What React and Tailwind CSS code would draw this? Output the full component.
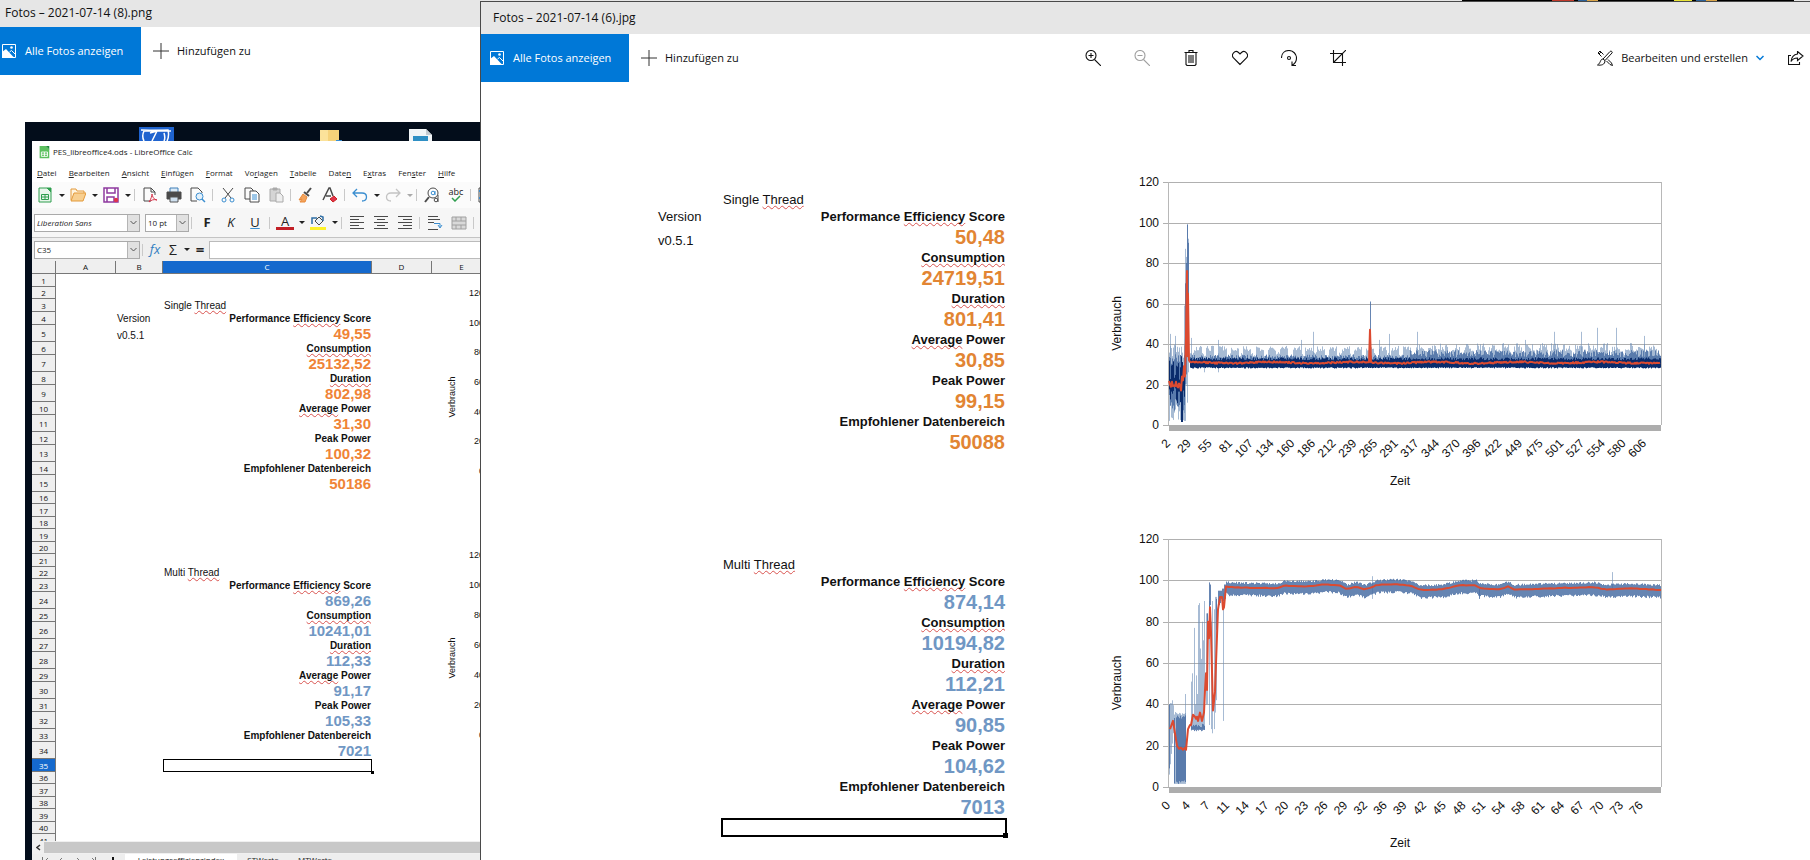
import { clsx } from "clsx"

const METRICS = [
  { label: "Performance Efficiency Score", typo: "Efficiency" },
  { label: "Consumption", typo: "Consumption" },
  { label: "Duration", typo: "Duration" },
  { label: "Average Power", typo: "Average" },
  { label: "Peak Power" },
  { label: "Empfohlener Datenbereich" },
]

const RUN_8 = {
  single: ["49,55", "25132,52", "802,98", "31,30", "100,32", "50186"],
  multi: ["869,26", "10241,01", "112,33", "91,17", "105,33", "7021"],
}

const RUN_6 = {
  single: ["50,48", "24719,51", "801,41", "30,85", "99,15", "50088"],
  multi: ["874,14", "10194,82", "112,21", "90,85", "104,62", "7013"],
}

const MENU = [
  ["", "D", "atei"],
  ["", "B", "earbeiten"],
  ["", "A", "nsicht"],
  ["", "E", "infügen"],
  ["", "F", "ormat"],
  ["Vo", "r", "lagen"],
  ["", "T", "abelle"],
  ["Date", "n", ""],
  ["E", "x", "tras"],
  ["Fen", "s", "ter"],
  ["", "H", "ilfe"],
]

const ZEIT_SINGLE = [2, 29, 55, 81, 107, 134, 160, 186, 212, 239, 265, 291, 317, 344, 370, 396, 422, 449, 475, 501, 527, 554, 580, 606]
const ZEIT_MULTI = [0, 4, 7, 11, 14, 17, 20, 23, 26, 29, 32, 36, 39, 42, 45, 48, 51, 54, 58, 61, 64, 67, 70, 73, 76]
const TICKS = [0, 20, 40, 60, 80, 100, 120]

/* ---------- power curves ---------- */

const PLOT_LEFT = 63
const PLOT_WIDTH = 492
const PLOT_TOP = 8

function makeRandom(seed) {
  let s = seed
  return () => {
    s = (s * 16807) % 2147483647
    return s / 2147483647
  }
}

// linear interpolation through [x, value] points
function sample(points, x) {
  for (let i = 1; i < points.length; i++) {
    const [x0, v0] = points[i - 1]
    const [x1, v1] = points[i]
    if (x <= x1) return v0 + ((v1 - v0) * (x - x0)) / (x1 - x0)
  }
  return points[points.length - 1][1]
}

function bar(x, low, high) {
  return { x, low, high }
}

function singleSeries() {
  const rnd = makeRandom(41)
  const light = []
  const mid = []
  const dark = []
  const avg = []
  for (let px = 0; px < PLOT_WIDTH; px++) {
    if (px < 16) {
      light.push(bar(px, 2 + rnd() * 9, 33 + rnd() * 7))
      mid.push(bar(px, 7 + rnd() * 8, 28 + rnd() * 7))
      dark.push(bar(px, 10 + rnd() * 9, 22 + rnd() * 10))
      avg.push([px, 18.5 + rnd() * 3.5])
      continue
    }
    if (px < 21) continue
    const burst = px % 12.3 < 8
    const late = px > 240
    light.push(bar(px, 29, (burst ? 36.5 : 33.5) + rnd() * (late ? 4 : 2.6)))
    mid.push(bar(px, 28.5, late ? 33.5 + rnd() * 3.5 : 32.5 + rnd() * 2.2))
    dark.push(bar(px, 27.9 + rnd() * 0.7, 32 + rnd() * 1.4))
    avg.push([px, 30.4 + Math.sin(px / 13) * 0.35 + rnd() * 0.8])
  }
  dark.push(bar(12, 1.5, 34), bar(13, 1.5, 31))
  light.push(bar(1, 20, 45), bar(6, 20, 44), bar(15, 2, 59), bar(16, 2, 87), bar(18, 11, 99), bar(17, 20, 83), bar(19, 26, 92))
  mid.push(bar(16, 20, 70), bar(17, 25, 80), bar(18, 40, 99), bar(19, 50, 90), bar(201, 30, 61))
  light.push(bar(22, 30, 43), bar(49, 26, 42), bar(35, 26, 31), bar(144, 30, 46), bar(132, 30, 42), bar(210, 30, 42), bar(220, 30, 45))
  light.push(bar(248, 30, 46), bar(356, 30, 42), bar(385, 30, 46), bar(412, 30, 46), bar(428, 30, 48), bar(447, 30, 48), bar(475, 30, 44))
  const line = [
    ...avg.slice(0, 12),
    [12, 17], [13, 24], [14, 22], [15, 29], [16, 24], [17, 44], [18, 76], [18.5, 34], [19, 65], [19.5, 48], [20, 32],
    ...avg.slice(16, 195),
    [200, 31], [201, 47], [202, 31],
    ...avg.slice(198),
  ]
  return { light, mid, dark, line }
}

const MULTI_AVG = [
  [1, 28], [4, 32], [6, 26], [8, 20], [10, 18.5], [12, 19], [14, 18], [16, 19], [17, 18], [19, 28], [21, 30], [22, 30],
  [24, 35], [26, 34], [27, 33], [28, 34], [29, 32], [31, 36], [32, 34], [33, 32], [35, 36], [36, 47], [37, 55], [38, 47],
  [39, 80], [40, 72], [41, 87], [42, 75], [44, 37], [46, 46], [47, 60], [49, 86], [51, 92], [53, 92], [54, 86], [55, 87],
  [57, 97], [60, 96.5], [108, 96], [115, 97.3], [142, 97], [155, 98], [170, 97.5], [178, 95.5], [187, 96.8], [196, 95.3],
  [208, 97.6], [228, 98], [242, 97.2], [251, 95.2], [274, 95.5], [288, 97.3], [307, 97.6], [311, 96], [331, 95.5],
  [339, 97], [345, 95.4], [398, 96.2], [425, 96.5], [438, 95.4], [458, 96], [492, 95.3],
]

function multiSeries() {
  const rnd = makeRandom(977)
  const light = []
  const mid = []
  for (let px = 57; px < PLOT_WIDTH; px++) {
    const v = sample(MULTI_AVG, px)
    mid.push(bar(px, v - 3 - rnd() * 1.2, v + 1.9 + rnd() * 1))
  }
  for (let px = 0; px < 5; px++) light.push(bar(px, 6 + px * 5, 38 + rnd() * 5))
  for (let px = 5; px < 17; px++) {
    light.push(bar(px, 1.5, 34 + rnd() * 2.5))
    if (px > 6 || px % 2) mid.push(bar(px, 1.5 + rnd() * 2, 33 + rnd() * 2))
  }
  const spikes = [51, 55, 34, 77, 40, 54, 45, 88, 89, 67, 62, 80, 71, 90]
  spikes.forEach((v, i) => {
    light.push(bar(22 + i, 28, v))
    mid.push(bar(22 + i, 27 + rnd(), 29 + rnd() * 2))
  })
  light.push(bar(16, 20, 45), bar(37, 40, 84), bar(38, 40, 84), bar(40, 30, 90), bar(42, 28, 80), bar(43, 26, 90))
  light.push(bar(45, 28, 86), bar(46, 36, 92), bar(47, 42, 92), bar(54, 32, 94), bar(203, 91, 102))
  mid.push(bar(0, 9, 40), bar(38, 76, 84), bar(40, 84, 99), bar(41, 88, 98), bar(47, 76, 91), bar(49, 88, 95))
  mid.push(bar(50, 88, 95), bar(51, 89, 95), bar(52, 91, 95), bar(53, 91, 96), bar(54, 90, 96), bar(55, 92, 98), bar(56, 91, 98))
  mid.push(bar(310, 91, 96))
  light.push(bar(443, 96, 104))
  const line = MULTI_AVG.filter(([x]) => x < 60)
  for (let px = 60; px <= PLOT_WIDTH; px += 3) line.push([px, sample(MULTI_AVG, px) + rnd() * 0.3])
  return { light, mid, dark: [], line }
}

const SINGLE = singleSeries()
const MULTI = multiSeries()

function PowerChart({ title, height, zeit, pitch, series }) {
  const bottom = PLOT_TOP + height
  const y = (v) => bottom - (v * height) / 120
  const bars = (list) => list.map((b) => `M${PLOT_LEFT + b.x + 0.5} ${y(b.low).toFixed(1)}V${y(b.high).toFixed(1)}`).join("")
  const line = series.line.map(([x, v]) => `${PLOT_LEFT + x},${y(v).toFixed(1)}`).join(" ")
  const right = PLOT_LEFT + PLOT_WIDTH

  return (
    <svg
      role="img"
      aria-label={title}
      width="570"
      height={bottom + 74}
      className="block shrink-0 fill-[#111] font-['Liberation_Sans',Arial,sans-serif] text-xs"
    >
      {TICKS.map((v) => (
        <g key={v}>
          <path d={`M${PLOT_LEFT - 6} ${Math.round(y(v)) + 0.5}H${right}`} stroke="#b0b0b0" />
          <text x="53" y={y(v) + 4} textAnchor="end">
            {v}
          </text>
        </g>
      ))}
      <path d={`M${PLOT_LEFT - 0.5} ${PLOT_TOP}V${bottom}M${right + 0.5} ${PLOT_TOP}V${bottom}`} stroke="#b8b8b8" />
      <path d={`M${PLOT_LEFT} ${bottom + 3}H${right}`} stroke="#adadad" strokeWidth="6" />
      <path d={bars(series.light)} stroke="#6d8db8" strokeOpacity="0.6" />
      <path d={bars(series.mid)} stroke="#4b70a5" strokeOpacity="0.85" />
      <path d={bars(series.dark)} stroke="#0a2c6c" />
      <polyline points={line} fill="none" stroke="#dc4a30" strokeWidth="2" strokeLinejoin="round" />
      {zeit.map((t, i) => {
        const x = PLOT_LEFT + 2 + i * pitch
        const ty = bottom + 19
        return (
          <text key={t} x={x} y={ty} textAnchor="end" transform={`rotate(-45 ${x} ${ty})`}>
            {t}
          </text>
        )
      })}
      <text x="294" y={bottom + 60} textAnchor="middle">
        Zeit
      </text>
      <text x="15" y={bottom - height / 2 + 20} textAnchor="middle" transform={`rotate(-90 15 ${bottom - height / 2 + 20})`}>
        Verbrauch
      </text>
    </svg>
  )
}

/* ---------- spreadsheet ---------- */

function Spell({ text, typo }) {
  if (!typo) return text
  const [before, after] = text.split(typo)
  return (
    <>
      {before}
      <span className="underline decoration-[#d9534f] decoration-wavy decoration-1 underline-offset-1 [text-decoration-skip-ink:none]">
        {typo}
      </span>
      {after}
    </>
  )
}

// what stands in columns B and C of a given row
function cellsFor(row, data) {
  if (row === 3) return { kind: "title", text: "Single Thread" }
  if (row === 22) return { kind: "title", text: "Multi Thread" }
  if (row === 35) return { kind: "selected" }
  const multi = row > 22
  const index = row - (multi ? 23 : 4)
  if (index < 0 || index > 11) return { kind: "blank" }
  const side = row === 4 ? "Version" : row === 5 ? "v0.5.1" : ""
  const metric = Math.floor(index / 2)
  if (index % 2 === 0) return { kind: "label", side, ...METRICS[metric] }
  return { kind: "value", side, multi, text: (multi ? data.multi : data.single)[metric] }
}

function rowHeight(row, kind, compact) {
  if (!compact) return kind === "value" ? "h-6" : "h-[17px]"
  if (kind === "value") return "h-[17px]"
  return kind === "label" || row % 2 ? "h-[13px]" : "h-3"
}

function Sheet({ data, first, last, compact }) {
  const rows = Array.from({ length: last - first + 1 }, (_, i) => first + i)

  return (
    <table
      className={clsx(
        "shrink-0 table-fixed border-separate border-spacing-0 whitespace-nowrap font-['Liberation_Sans',Arial,sans-serif] text-[#111]",
        compact ? "w-[460px] text-[10px] leading-3" : "w-[349px] text-[13px] leading-[17px]",
      )}
    >
      {compact ? (
        <colgroup>
          <col className="w-6" />
          <col className="w-[60px]" />
          <col className="w-[47px]" />
          <col className="w-[209px]" />
          <col className="w-[60px]" />
          <col className="w-[60px]" />
        </colgroup>
      ) : (
        <colgroup>
          <col className="w-[65px]" />
          <col className="w-[284px]" />
        </colgroup>
      )}
      {compact && (
        <thead className="bg-[#efefef] font-['Open_Sans',sans-serif] text-[8px]">
          <tr className="h-[13px]">
            {["", "A", "B", "C", "D", "E"].map((name) => (
              <th
                key={name}
                className={clsx(
                  "border-r border-b border-[#777] font-normal",
                  name === "C" && "bg-[#1569cd] text-white",
                )}
              >
                {name}
              </th>
            ))}
          </tr>
        </thead>
      )}
      <tbody>
        {rows.map((row) => {
          const cell = cellsFor(row, data)
          return (
            <tr key={row} className={rowHeight(row, cell.kind, compact)}>
              {compact && (
                <th
                  className={clsx(
                    "border-r border-b border-[#777] font-['Open_Sans',sans-serif] text-[8px] leading-[11px] font-normal",
                    row === 35 ? "bg-[#1569cd] text-white" : "bg-[#efefef]",
                  )}
                >
                  {row}
                </th>
              )}
              {compact && <td />}
              <td className="pl-px align-bottom">{cell.side}</td>
              {cell.kind === "title" && (
                <td className="pl-px">
                  <Spell text={cell.text} typo="Thread" />
                </td>
              )}
              {cell.kind === "label" && (
                <td className="pr-px text-right font-bold">
                  <Spell text={cell.label} typo={cell.typo} />
                </td>
              )}
              {cell.kind === "value" && (
                <td
                  className={clsx(
                    "pr-px text-right font-bold",
                    compact ? "text-[15px] leading-[17px]" : "text-xl leading-6",
                    cell.multi ? "text-[#7097c4]" : compact ? "text-[#f08437]" : "text-[#e28533]",
                  )}
                >
                  {cell.text}
                </td>
              )}
              {cell.kind === "selected" && (
                <td className={clsx("relative -outline-offset-1 outline-black", compact ? "outline-1" : "outline-2")}>
                  <span className={clsx("absolute -right-0.5 -bottom-0.5 bg-black", compact ? "size-[3px]" : "size-[5px]")} />
                </td>
              )}
              {cell.kind === "blank" && <td />}
              {compact && <td colSpan={2} />}
            </tr>
          )
        })}
      </tbody>
    </table>
  )
}

// axis captions of the two charts that stick out of column E
function ChartEdges() {
  const charts = [
    { top: 32, zero: 210, middle: 136 },
    { top: 294, zero: 474, middle: 397 },
  ]
  return (
    <svg
      width="60"
      height="500"
      className="absolute top-0 left-[408px] fill-[#111] font-['Liberation_Sans',Arial,sans-serif] text-[9px]"
    >
      {charts.map((c) => (
        <g key={c.zero}>
          {TICKS.map((v) => (
            <text key={v} x="44" y={c.zero + 3 - (v / 120) * (c.zero - c.top)} textAnchor="end">
              {v}
            </text>
          ))}
          <text x="15" y={c.middle} textAnchor="middle" transform={`rotate(-90 15 ${c.middle})`}>
            Verbrauch
          </text>
        </g>
      ))}
    </svg>
  )
}

/* ---------- LibreOffice toolbars ---------- */

const Glyph = ({ children }) => (
  <svg width="16" height="16" viewBox="0 0 16 16" fill="none" stroke="#4a4a4a" aria-hidden="true">
    {children}
  </svg>
)

const LO_ICONS = {
  new: (
    <Glyph>
      <path d="M2 1H10L14 5V15H2Z" fill="#e9f6ec" stroke="#2f9e4f" />
      <path d="M10 1L14 5V1Z" fill="#2f9e4f" stroke="#2f9e4f" />
      <path d="M4.500 7.500H11.500V12.500H4.500ZM4.500 10H11.500M8 7.500V12.500" stroke="#2f9e4f" />
    </Glyph>
  ),
  open: (
    <Glyph>
      <path d="M1 13V2H6L7 4H14V6" stroke="#e39a3b" fill="#fff3dd" />
      <path d="M1 14L4 6H16L13 14Z" fill="#f8cf90" stroke="#e39a3b" />
    </Glyph>
  ),
  save: (
    <Glyph>
      <path d="M1 1H15V15H1Z" fill="#fff" stroke="#8e3aa0" strokeWidth="1.500" />
      <path d="M4 1V6H12V1M4 15V10H11V15" stroke="#8e3aa0" strokeWidth="1.500" />
      <circle cx="13" cy="13" r="2.200" fill="#e0334c" stroke="none" />
    </Glyph>
  ),
  pdf: (
    <Glyph>
      <path d="M9 14H2V1H9L13 5V8" />
      <path d="M9 1V5H13" />
      <path d="M7 15C9 12 10 9 10 7C10 9 12 13 15 13C12 12 9 13 7 15Z" stroke="#d6344a" />
    </Glyph>
  ),
  print: (
    <Glyph>
      <path d="M4 5V1H12V5" stroke="#3f7fb8" fill="#dcebf7" />
      <path d="M1 5H15V12H1Z" fill="#4a4a4a" />
      <path d="M4 10H12V15H4Z" fill="#cfe0ef" stroke="#555" />
    </Glyph>
  ),
  preview: (
    <Glyph>
      <path d="M7 14H1V1H8L12 5V6" />
      <circle cx="9.500" cy="9.500" r="3.500" stroke="#3b8ed0" fill="#e3f1fb" />
      <path d="M12 12L15 15" stroke="#3b8ed0" strokeWidth="1.500" />
    </Glyph>
  ),
  cut: (
    <Glyph>
      <path d="M3 1L11 11M13 1L5 11" />
      <circle cx="4" cy="13" r="2" stroke="#3b8ed0" />
      <circle cx="12" cy="13" r="2" stroke="#3b8ed0" />
    </Glyph>
  ),
  copy: (
    <Glyph>
      <path d="M6 12H1V1H7L9 3V4" />
      <path d="M6 4H12L15 7V15H6Z" fill="#fff" />
      <path d="M8 8H13M8 10H13M8 12H13" stroke="#3b8ed0" />
    </Glyph>
  ),
  paste: (
    <Glyph>
      <path d="M2 2H12V14H2Z" fill="#d5d5d5" stroke="#aaa" />
      <path d="M5 1H9V3H5Z" fill="#aaa" stroke="#aaa" />
      <path d="M8 6H12L15 9V15H8Z" fill="#eee" stroke="#aaa" />
    </Glyph>
  ),
  brush: (
    <Glyph>
      <path d="M13 1L9 6" strokeWidth="2" />
      <path d="M6 5L11 9" strokeWidth="2" />
      <path d="M5 7L9 10L7 15H2L4 12L1 13Z" fill="#f3a35c" stroke="#e98a3a" />
    </Glyph>
  ),
  clear: (
    <Glyph>
      <path d="M1 13L7 1H8L11 9M4 9H9" strokeWidth="1.500" />
      <path d="M8 12L12 9L15 12L11 15Z" fill="#e0334c" stroke="#c22" />
    </Glyph>
  ),
  undo: (
    <Glyph>
      <path d="M5 2L1 6L5 10M1 6H10C16 6 16 14 10 14" stroke="#3b8ed0" strokeWidth="1.300" />
    </Glyph>
  ),
  redo: (
    <Glyph>
      <path d="M11 2L15 6L11 10M15 6H6C0 6 0 14 6 14" stroke="#c4c4c4" strokeWidth="1.300" />
    </Glyph>
  ),
  find: (
    <Glyph>
      <circle cx="9" cy="6" r="5" fill="#fff" />
      <path d="M5 10L1 15" strokeWidth="2" />
      <circle cx="9" cy="6" r="1.800" stroke="#3b8ed0" />
      <path d="M11 4V8" stroke="#3b8ed0" />
      <circle cx="12" cy="13" r="1.800" />
      <path d="M14 8V15" />
    </Glyph>
  ),
  table: (
    <Glyph>
      <path d="M1 1H15V15H1Z" fill="#fff" />
      <path d="M1 4H15M1 11H15" stroke="#3b8ed0" strokeWidth="2" />
      <path d="M6 1V15" />
    </Glyph>
  ),
  bucket: (
    <Glyph>
      <path d="M5 6L9 2L13 6L9 10Z" fill="#e8f1f8" />
      <path d="M2 9V3H7M10 1L13 2V6" stroke="#2e6da4" strokeWidth="1.500" />
      <path d="M0 13.500H16" stroke="#fdf12a" strokeWidth="3" />
    </Glyph>
  ),
  left: (
    <Glyph>
      <path d="M1 1.500H15M1 4.500H10M1 7.500H15M1 10.500H10M1 13.500H15" />
    </Glyph>
  ),
  center: (
    <Glyph>
      <path d="M1 1.500H15M4 4.500H12M1 7.500H15M4 10.500H12M1 13.500H15" />
    </Glyph>
  ),
  right: (
    <Glyph>
      <path d="M1 1.500H15M6 4.500H15M1 7.500H15M6 10.500H15M1 13.500H15" />
    </Glyph>
  ),
  wrap: (
    <Glyph>
      <path d="M1 1.500H11M1 4.500H13M1 7.500H7M1 14.500H11" />
      <path d="M7 8.500H13V12M11 10L13 13L15 10" stroke="#3b8ed0" />
    </Glyph>
  ),
  merge: (
    <Glyph>
      <path d="M1 2H15V14H1ZM1 6H15M1 10H15M5 2V6M10 2V6M5 10V14M10 10V14" fill="#d9d9d9" stroke="#a0a0a0" />
    </Glyph>
  ),
}

function Tool({ label, className, children }) {
  return (
    <button type="button" aria-label={label} className={clsx("flex h-5 w-6 shrink-0 items-center justify-center", className)}>
      {children}
    </button>
  )
}

function Caret({ faded }) {
  return (
    <button type="button" aria-label="Optionen" className="flex h-5 w-[9px] shrink-0 items-center justify-center">
      <span className={clsx("border-x-[3px] border-t-[3px] border-x-transparent", faded ? "border-t-[#aaa]" : "border-t-[#222]")} />
    </button>
  )
}

function Divider() {
  return <span className="mr-[3px] ml-0.5 h-3 w-px shrink-0 bg-[#c9c9c9]" />
}

function Chevron() {
  return (
    <span className="pointer-events-none flex w-3 items-center justify-center border-l border-[#b5b5b5] bg-[#e1e1e1]">
      <svg width="7" height="5" viewBox="0 0 7 5" fill="none" stroke="#555">
        <path d="M0.500 1L3.500 4L6.500 1" />
      </svg>
    </span>
  )
}

function Combo({ label, value, className }) {
  return (
    <label className={clsx("flex h-[18px] shrink-0 border border-[#aaa] bg-white", className)}>
      <select aria-label={label} defaultValue={value} className="min-w-0 flex-1 appearance-none pl-0.5 outline-none">
        <option>{value}</option>
      </select>
      <Chevron />
    </label>
  )
}

function CalcWindow() {
  return (
    <div className="flex min-h-0 flex-1 flex-col overflow-hidden bg-[#f6f6f6] font-['Open_Sans',sans-serif] text-[8px] text-[#222]">
      <div className="flex h-[22px] shrink-0 items-center gap-0.5 bg-white pl-[5px]">
        <svg width="14" height="14" viewBox="0 0 16 16" fill="none">
          <path d="M3 1H10L14 5V15H3Z" fill="#5cc05f" />
          <path d="M10 1L14 5V1Z" fill="#1f8a3a" />
          <path d="M5 8H12V13H5ZM5 10.500H12M8.500 8V13" stroke="#fff" />
        </svg>
        <span>PES_libreoffice4.ods - LibreOffice Calc</span>
      </div>

      <nav className="flex h-[19px] shrink-0 items-center gap-3 bg-white pl-[5px]">
        {MENU.map(([before, key, after]) => (
          <button type="button" key={before + key + after} className="shrink-0">
            {before}
            <u>{key}</u>
            {after}
          </button>
        ))}
      </nav>

      <div className="flex h-[26px] shrink-0 items-center bg-[#fbfbfb] pl-px">
        <Tool label="Neu">{LO_ICONS.new}</Tool>
        <Caret />
        <Tool label="Öffnen">{LO_ICONS.open}</Tool>
        <Caret />
        <Tool label="Speichern">{LO_ICONS.save}</Tool>
        <Caret />
        <Divider />
        <Tool label="Als PDF exportieren">{LO_ICONS.pdf}</Tool>
        <Tool label="Drucken">{LO_ICONS.print}</Tool>
        <Tool label="Druckvorschau">{LO_ICONS.preview}</Tool>
        <Divider />
        <Tool label="Ausschneiden">{LO_ICONS.cut}</Tool>
        <Tool label="Kopieren">{LO_ICONS.copy}</Tool>
        <Tool label="Einfügen">{LO_ICONS.paste}</Tool>
        <Divider />
        <Tool label="Format übertragen">{LO_ICONS.brush}</Tool>
        <Tool label="Formatierung löschen">{LO_ICONS.clear}</Tool>
        <Divider />
        <Tool label="Rückgängig">{LO_ICONS.undo}</Tool>
        <Caret />
        <Tool label="Wiederherstellen">{LO_ICONS.redo}</Tool>
        <Caret faded />
        <Divider />
        <Tool label="Suchen">{LO_ICONS.find}</Tool>
        <Tool label="Rechtschreibung" className="flex-col">
          <span className="text-[9px] leading-[7px]">abc</span>
          <svg width="10" height="7" viewBox="0 0 10 7" fill="none" stroke="#2f9e4f" strokeWidth="1.500">
            <path d="M1 3L4 6L9 1" />
          </svg>
        </Tool>
        <Divider />
        <Tool label="Zeile">{LO_ICONS.table}</Tool>
      </div>

      <div className="flex h-[30px] shrink-0 items-center border-b border-[#c4c4c4] pl-0.5">
        <Combo label="Schriftart" value="Liberation Sans" className="mr-[5px] w-[106px] italic" />
        <Combo label="Schriftgröße" value="10 pt" className="w-11" />
        <Divider />
        <Tool label="Fett" className="text-[13px] font-bold">F</Tool>
        <Tool label="Kursiv" className="text-[13px] italic">K</Tool>
        <Tool label="Unterstrichen" className="text-[13px] underline decoration-[#3b8ed0]">U</Tool>
        <Divider />
        <Tool label="Schriftfarbe" className="flex-col text-[13px] leading-3">
          A
          <span className="h-[3px] w-[18px] bg-[#c21f26]" />
        </Tool>
        <Caret />
        <Tool label="Hintergrundfarbe">{LO_ICONS.bucket}</Tool>
        <Caret />
        <Divider />
        <Tool label="Linksbündig">{LO_ICONS.left}</Tool>
        <Tool label="Zentriert">{LO_ICONS.center}</Tool>
        <Tool label="Rechtsbündig">{LO_ICONS.right}</Tool>
        <Divider />
        <Tool label="Textumbruch">{LO_ICONS.wrap}</Tool>
        <Tool label="Zellen verbinden">{LO_ICONS.merge}</Tool>
        <Divider />
      </div>

      <div className="flex h-[23px] shrink-0 items-center bg-[#efefef] pl-0.5">
        <Combo label="Namenfeld" value="C35" className="w-[106px]" />
        <Divider />
        <button type="button" aria-label="Funktions-Assistent" className="w-[18px] text-[13px] italic text-[#2e7cc0]">fx</button>
        <button type="button" aria-label="Summe" className="w-[18px] text-sm">Σ</button>
        <Caret />
        <button type="button" aria-label="Formel" className="w-[18px] text-[15px] font-bold">=</button>
        <input aria-label="Eingabezeile" className="h-[18px] min-w-0 flex-1 border border-r-0 border-[#bbb] bg-white px-1 outline-none" />
      </div>

      <div className="relative min-h-0 flex-1 overflow-hidden bg-white">
        <Sheet data={RUN_8} first={1} last={41} compact />
        <ChartEdges />
      </div>

      <div className="flex h-[13px] shrink-0 items-center bg-[#f0f0f0]">
        <button type="button" aria-label="Nach links" className="flex w-3 justify-center">
          <svg width="5" height="7" viewBox="0 0 5 7" fill="none" stroke="#333" strokeWidth="1.500">
            <path d="M4 1L1 3.500L4 6" />
          </svg>
        </button>
        <span className="h-[11px] flex-1 bg-[#c8c8c8]" />
      </div>
      <div className="flex h-1.5 shrink-0 items-start overflow-hidden bg-[#eee] leading-[11px]">
        <svg width="93" height="6" viewBox="0 0 93 6" fill="none" stroke="#777">
          <path d="M10.500 3V6M16 4L14 6M30 4L28 6M45 4L47 6M60 4L62 6M63.500 3V6" />
          <path d="M81 3V6" stroke="#111" strokeWidth="2" />
        </svg>
        <button type="button" className="w-28 bg-white">Leistungseffizienzindex</button>
        <button type="button" className="w-[52px]">STWerte</button>
        <button type="button" className="w-[52px]">MTWerte</button>
      </div>
    </div>
  )
}

/* ---------- photo viewer ---------- */

function ViewerActions({ inset }) {
  return (
    <div className="flex shrink-0 text-[11px]">
      <button type="button" className={clsx("flex h-12 items-center gap-[9px] bg-[#0078d7] text-white", inset ? "w-[148px] pl-[9px]" : "w-[141px] pl-0.5")}>
        <svg width="14" height="14" viewBox="0 0 14 14" fill="none">
          <path d="M0.500 0.500H13.500V13.500H0.500Z" stroke="#fff" />
          <path d="M0 8L4 5L11 12.500L13 14H0Z" fill="#fff" />
          <path d="M7.500 8L9.500 6.500L14 11" stroke="#fff" />
          <circle cx="9.500" cy="3.500" r="1.300" fill="#fff" />
        </svg>
        Alle Fotos anzeigen
      </button>
      <button type="button" className="flex h-12 items-center gap-2 pr-4 pl-3">
        <svg width="16" height="16" viewBox="0 0 16 16" stroke="#333">
          <path d="M8 0V16M0 8H16" />
        </svg>
        Hinzufügen zu
      </button>
    </div>
  )
}

function PhotoIcon({ label, faded, children }) {
  return (
    <button type="button" aria-label={label} className={clsx("flex h-12 w-[49px] items-center justify-center", faded && "opacity-40")}>
      <svg width="16" height="16" viewBox="0 0 16 16" fill="none" stroke="#111" strokeWidth="1.100">
        {children}
      </svg>
    </button>
  )
}

function BackWindow() {
  return (
    <section className="flex w-[480px] shrink-0 flex-col overflow-hidden">
      <header className="flex h-[27px] shrink-0 items-center bg-[#e6e6e6] pb-0.5 pl-[5px] text-xs">Fotos – 2021-07-14 (8).png</header>
      <ViewerActions />
      <div className="mt-[47px] ml-[25px] flex min-h-0 flex-1 flex-col bg-[#030d1b] pl-[7px]">
        <div className="flex h-[19px] shrink-0 items-end pl-[107px]">
          <svg width="35" height="14" viewBox="0 0 35 14" fill="none">
            <path d="M0 0H35V14H0Z" fill="#1f63cf" />
            <path d="M5 14C3 10 4 6 5 4L29 3C30 7 30 10 28 14M2 3L32 4M11 6L18 4L13 14M25 6C26 9 26 12 25 14" stroke="#fff" strokeWidth="1.500" />
          </svg>
          <svg width="22" height="11" viewBox="0 0 22 11" className="ml-[146px]">
            <path d="M0 0H19V11H0Z" fill="#f5d27a" />
            <path d="M0 0H8V11H0Z" fill="#fbe29a" />
            <path d="M16 10H22V11H16Z" fill="#3b8ed0" />
          </svg>
          <svg width="23" height="12" viewBox="0 0 23 12" className="ml-[67px]">
            <path d="M0 0H17L23 6V12H0Z" fill="#f2f5f7" />
            <path d="M17 0V6H23Z" fill="#c5ccd2" />
            <path d="M4 7H19V12H4Z" fill="#2f8fc4" />
          </svg>
        </div>
        <CalcWindow />
      </div>
    </section>
  )
}

function FrontWindow() {
  return (
    <section className="flex min-w-0 flex-1 flex-col overflow-hidden">
      {/* sliver of the desktop above the window */}
      <div className="flex h-px shrink-0 justify-end bg-[#e6e6e6]">
        <span className="w-[90px] bg-black" />
        <span className="w-[22px] bg-[#c0392b]" />
        <span className="w-1 bg-black" />
        <span className="w-[9px] bg-[#2a6099]" />
        <span className="w-[11px] bg-[#d9a54a]" />
        <span className="w-[76px] bg-black" />
        <span className="w-[18px] bg-[#e8e337]" />
        <span className="w-1 bg-black" />
        <span className="w-2.5 bg-[#2a6099]" />
        <span className="w-[11px] bg-[#d9a54a]" />
        <span className="w-[77px] bg-black" />
        <span className="w-4" />
      </div>
      <div className="flex min-h-0 flex-1 flex-col border-t border-l border-[#4a4a4a] bg-white">
        <header className="flex h-8 shrink-0 items-center bg-[#e6e6e6] pl-3 text-xs">Fotos – 2021-07-14 (6).jpg</header>
        <div className="flex shrink-0 justify-between">
          <ViewerActions inset />
          <div className="flex pl-20">
            <PhotoIcon label="Vergrößern">
              <circle cx="6" cy="5.500" r="5" />
              <path d="M6 3V8M3.500 5.500H8.500M9.500 9.500L16 16" />
            </PhotoIcon>
            <PhotoIcon label="Verkleinern" faded>
              <circle cx="6" cy="5.500" r="5" />
              <path d="M3.500 5.500H8.500M9.500 9.500L16 16" />
            </PhotoIcon>
            <PhotoIcon label="Löschen">
              <path d="M1.500 2.500H14.500M6 2.500V0.500H10V2.500M3 2.500V14.500L4 15.500H12L13 14.500V2.500M6 5V13M8 5V13M10 5V13" />
            </PhotoIcon>
            <PhotoIcon label="Favorit">
              <path d="M8 14.500L1.500 8C-1.500 4.500 3 -0.500 6.500 2.500L8 4L9.500 2.500C13 -0.500 17.500 4.500 14.500 8Z" />
            </PhotoIcon>
            <PhotoIcon label="Drehen">
              <path d="M0.500 8C0.500 3 4 0.500 8 0.500C12 0.500 15.500 4 15.500 8C15.500 11 14 13.500 11.500 15M11 11.500V15.500H15" />
              <circle cx="8" cy="8" r="1.500" />
            </PhotoIcon>
            <PhotoIcon label="Zuschneiden">
              <path d="M0 3.500H12.500V16M3.500 0V12.500H16M3.500 12.500L16 0" />
            </PhotoIcon>
          </div>
          <div className="flex shrink-0 items-center">
            <button type="button" className="flex h-12 items-center gap-2 text-[11px]">
              <svg width="16" height="16" viewBox="0 0 16 16" fill="none" stroke="#111">
                <path d="M4.500 6.500L1 3L3 1L6.500 4.500M11 9.500L14.500 13L15.500 15.500L13 14.500L9.500 11M2 4L4 2" />
                <path d="M6 9L13 1.500C14 0.500 16 2 15 3L8 10.500ZM6 9C3 9 4 13 0.500 15C4 15.500 8 15 8 10.500" />
              </svg>
              Bearbeiten und erstellen
              <svg width="8" height="6" viewBox="0 0 8 6" fill="none" stroke="#0078d7" strokeWidth="1.500">
                <path d="M0.500 1L4 4.500L7.500 1" />
              </svg>
            </button>
            <button type="button" aria-label="Teilen" className="flex h-12 items-center pr-1.5 pl-6">
              <svg width="16" height="14" viewBox="0 0 16 14" fill="none" stroke="#111" strokeWidth="1.100">
                <path d="M3 4.500H0.500V13.500H11.500V11" />
                <path d="M9.500 0.500L15 5L9.500 9.500V7C6.500 7 4.500 8 3 10.500C3.500 6 6 3.500 9.500 3Z" />
              </svg>
            </button>
          </div>
        </div>

        <main className="flex min-h-0 flex-1 items-start gap-[100px] overflow-hidden pl-44">
          <div className="pt-[109px]">
            <Sheet data={RUN_6} first={3} last={35} />
          </div>
          <div className="flex flex-col gap-8 pt-[92px]">
            <PowerChart title="Verbrauch Single Thread" height={243} zeit={ZEIT_SINGLE} pitch={20.7} series={SINGLE} />
            <PowerChart title="Verbrauch Multi Thread" height={248} zeit={ZEIT_MULTI} pitch={19.7} series={MULTI} />
          </div>
        </main>
      </div>
    </section>
  )
}

export default function App() {
  return (
    <div className="flex h-screen overflow-hidden bg-white font-['Open_Sans',sans-serif] text-[#111]">
      <BackWindow />
      <FrontWindow />
    </div>
  )
}
